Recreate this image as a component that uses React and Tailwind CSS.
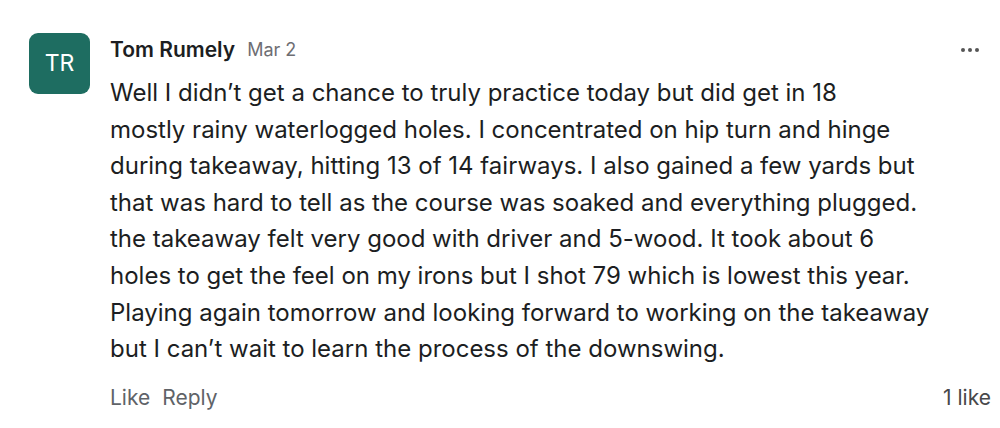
const lines = [
  'Well I didn’t get a chance to truly practice today but did get in 18',
  'mostly rainy waterlogged holes. I concentrated on hip turn and hinge',
  'during takeaway, hitting 13 of 14 fairways. I also gained a few yards but',
  'that was hard to tell as the course was soaked and everything plugged.',
  'the takeaway felt very good with driver and 5-wood. It took about 6',
  'holes to get the feel on my irons but I shot 79 which is lowest this year.',
  'Playing again tomorrow and looking forward to working on the takeaway',
  'but I can’t wait to learn the process of the downswing.',
];

export default function App() {
  return (
    <div className="w-[1000px] h-[428px] bg-white font-['Inter',sans-serif] text-[#1c1e22] flex pl-[29px] pr-[9px] pt-[33px]">
      <div className="w-[61px] h-[61px] shrink-0 rounded-[9px] bg-[#1e6d61] text-white flex items-center justify-center text-[23px]">
        TR
      </div>
      <div className="flex-1 ml-[20px] flex flex-col">
        <div className="flex items-center h-[33px]">
          <span className="text-[21px] font-semibold text-[#1c1e22]">Tom Rumely</span>
          <span className="ml-[12px] text-[18px] text-[#6e6e73]">Mar 2</span>
          <button className="ml-auto mr-[12px] flex gap-[3px] items-center">
            <span className="w-[4px] h-[4px] rounded-full bg-[#555]" />
            <span className="w-[4px] h-[4px] rounded-full bg-[#555]" />
            <span className="w-[4px] h-[4px] rounded-full bg-[#555]" />
          </button>
        </div>
        <div className="mt-[9px] text-[24px] leading-[36.6px]">
          {lines.map((l, i) => (
            <div key={i} className="whitespace-nowrap">{l}</div>
          ))}
        </div>
        <div className="mt-[14px] flex items-center text-[21px] text-[#5f6368]">
          <span>Like</span>
          <span className="ml-[12px]">Reply</span>
          <span className="ml-auto text-[#48484a]">1 like</span>
        </div>
      </div>
    </div>
  );
}
